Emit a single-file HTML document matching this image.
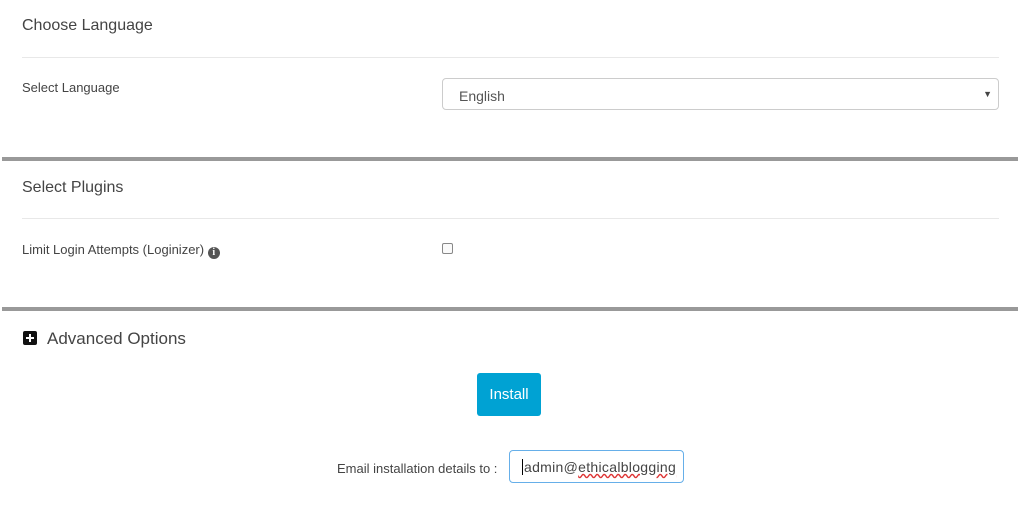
<!DOCTYPE html>
<html><head><style>
body{margin:0;width:1020px;height:506px;background:#fff;font-family:"Liberation Sans",sans-serif;color:#444;position:relative;overflow:hidden}
.a{position:absolute;white-space:nowrap}
.h{font-size:16px;color:#444}
.l{font-size:13px;color:#444}
.hr{position:absolute;left:22px;width:977px;height:1px;background:#e8e8e8}
.bar{position:absolute;left:2px;width:1016px;height:4px;background:#999}
</style></head><body>
<div class="a h" style="left:22px;top:17px">Choose Language</div>
<div class="hr" style="top:57px"></div>
<div class="a l" style="left:22px;top:80px">Select Language</div>
<div class="a" style="left:442px;top:78px;height:32px;border:1px solid #ccc;border-radius:4px;box-sizing:border-box;width:557px">
 <span class="a" style="left:16px;top:9px;font-size:14px;color:#555">English</span>
 <span class="a" style="right:6px;top:10px;font-size:9px;color:#444">&#9660;</span>
</div>
<div class="bar" style="top:157px"></div>
<div class="a h" style="left:22px;top:179px">Select Plugins</div>
<div class="hr" style="top:218px"></div>
<div class="a l" style="left:22px;top:242px">Limit Login Attempts (Loginizer) <span style="display:inline-block;width:12px;height:12px;border-radius:50%;background:#555;color:#fff;font-size:10px;font-weight:bold;text-align:center;line-height:12px;font-family:'Liberation Serif',serif;vertical-align:-1px">i</span></div>
<div class="a" style="left:442px;top:243px;width:11px;height:11px;border:1px solid #888;border-radius:2px;box-sizing:border-box;background:#fafafa"></div>
<div class="bar" style="top:307px"></div>
<div class="a" style="left:23px;top:331px;width:14px;height:14px;background:#111;border-radius:2px">
 <div class="a" style="left:6px;top:3px;width:2px;height:8px;background:#fff"></div>
 <div class="a" style="left:3px;top:6px;width:8px;height:2px;background:#fff"></div>
</div>
<div class="a h" style="left:47px;top:329px;font-size:17px">Advanced Options</div>
<div class="a" style="left:477px;top:373px;width:64px;height:43px;background:#00a2d3;border-radius:3px;color:#fff;font-size:15px;text-align:center;line-height:43px">Install</div>
<div class="a l" style="left:337px;top:461px">Email installation details to :</div>
<div class="a" style="left:509px;top:450px;width:175px;height:33px;border:1px solid #66afe9;border-radius:4px;box-sizing:border-box;overflow:hidden">
 <span class="a" style="left:12px;top:8px;font-size:14px;color:#444;border-left:1px solid #000;padding-left:1px;letter-spacing:0.3px">admin@<span style="text-decoration:underline wavy #d33">ethicalblogging</span></span>
</div>
</body></html>
